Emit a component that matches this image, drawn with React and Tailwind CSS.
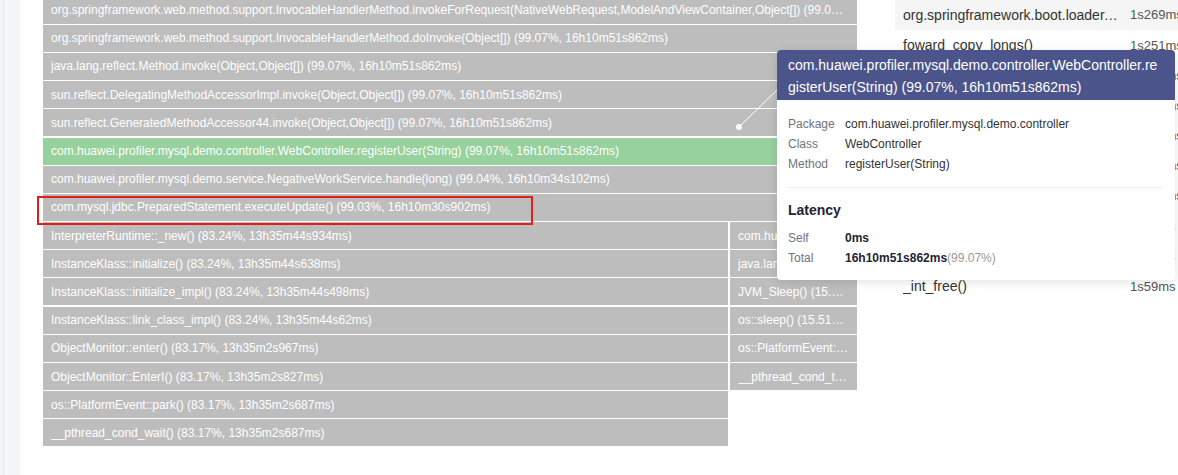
import React from 'react'

const rows = [
  ['org.springframework.web.method.support.InvocableHandlerMethod.invokeForRequest(NativeWebRequest,ModelAndViewContainer,Object[]) (99.07%, 16h10m51s862ms)'],
  ['org.springframework.web.method.support.InvocableHandlerMethod.doInvoke(Object[]) (99.07%, 16h10m51s862ms)'],
  ['java.lang.reflect.Method.invoke(Object,Object[]) (99.07%, 16h10m51s862ms)'],
  ['sun.reflect.DelegatingMethodAccessorImpl.invoke(Object,Object[]) (99.07%, 16h10m51s862ms)'],
  ['sun.reflect.GeneratedMethodAccessor44.invoke(Object,Object[]) (99.07%, 16h10m51s862ms)'],
  ['com.huawei.profiler.mysql.demo.controller.WebController.registerUser(String) (99.07%, 16h10m51s862ms)'],
  ['com.huawei.profiler.mysql.demo.service.NegativeWorkService.handle(long) (99.04%, 16h10m34s102ms)'],
  ['com.mysql.jdbc.PreparedStatement.executeUpdate() (99.03%, 16h10m30s902ms)'],
  ['InterpreterRuntime::_new() (83.24%, 13h35m44s934ms)', 'com.huawei.profiler.mysql.demo.service (15.60%, 2h31m3s)'],
  ['InstanceKlass::initialize() (83.24%, 13h35m44s638ms)', 'java.lang.Thread.sleep(long) (15.52%, 2h30m10s)'],
  ['InstanceKlass::initialize_impl() (83.24%, 13h35m44s498ms)', 'JVM_Sleep() (15.52%, 2h30m10s)'],
  ['InstanceKlass::link_class_impl() (83.24%, 13h35m44s62ms)', 'os::sleep() (15.51%, 2h30m2s)'],
  ['ObjectMonitor::enter() (83.17%, 13h35m2s967ms)', 'os::PlatformEvent::park(long) (15.51%)'],
  ['ObjectMonitor::EnterI() (83.17%, 13h35m2s827ms)', '__pthread_cond_timedwait() (15.51%)'],
  ['os::PlatformEvent::park() (83.17%, 13h35m2s687ms)'],
  ['__pthread_cond_wait() (83.17%, 13h35m2s687ms)'],
]

const topList = [
  ['org.springframework.boot.loader.jar.JarFile', '1s269ms'],
  ['foward_copy_longs()', '1s251ms'],
  ['java.util.zip.Inflater.inflateBytes()', '1s237ms'],
  ['java.lang.ClassLoader.defineClass1()', '1s203ms'],
  ['SymbolTable::lookup()', '1s188ms'],
  ['ClassFileParser::parse_method()', '1s154ms'],
  ['Rewriter::rewrite()', '1s121ms'],
  ['malloc()', '1s98ms'],
  ['memcpy()', '1s76ms'],
  ['_int_free()', '1s59ms'],
]

function Bar({ label, green, className }) {
  return (
    <div
      className={`h-[27px] flex items-center px-2 text-[12px] text-white overflow-hidden ${
        green ? 'bg-[#97d19d]' : 'bg-[#bdbdbd]'
      } ${className}`}
    >
      <span className="truncate">{label}</span>
    </div>
  )
}

export default function App() {
  return (
    <div className="relative flex w-[1178px] h-[475px] overflow-hidden bg-white font-['Liberation_Sans',Arial,sans-serif]">
      <div className="w-[20px] shrink-0 bg-[#f4f5f7] pl-[3px]">
        <div className="h-full border-l border-[#e4e5ea]" />
      </div>

      <div className="flex flex-1 pl-[23px]">
        {/* flame graph */}
        <div className="w-[814px] shrink-0 -mt-[3.4px] flex flex-col">
          {rows.map(([a, b], i) => (
            <div key={i} className="h-[28.2px] flex gap-[2px] shrink-0">
              {rows[i].length === 1 && i < 8 ? (
                <Bar label={a} green={i === 5} className="w-full" />
              ) : (
                <>
                  <Bar label={a} className="w-[685px] shrink-0" />
                  {b && <Bar label={b} className="w-[127px] shrink-0" />}
                </>
              )}
            </div>
          ))}
        </div>

        {/* top list */}
        <div className="ml-[38px] flex-1 flex flex-col">
          {topList.map(([name, time], i) => (
            <div
              key={name}
              className={`h-[30.2px] flex items-center pl-2 shrink-0 ${i === 0 ? 'bg-[#f5f5f5]' : ''}`}
            >
              <span className="w-[216px] truncate text-[14px] text-[#333]">{name}</span>
              <span className="ml-[11px] text-[13px] text-[#555] whitespace-nowrap">{time}</span>
            </div>
          ))}
        </div>
      </div>

      {/* highlight annotation */}
      <div className="absolute left-[37px] top-[196px] w-[496px] h-[29px] border-2 border-[#e51c1c]" />

      {/* tooltip pointer */}
      <svg className="absolute left-0 top-0 pointer-events-none" width="1178" height="475">
        <line x1="739" y1="127" x2="778" y2="89" stroke="#ffffff" strokeWidth="1" />
        <circle cx="739" cy="127" r="3" fill="#ffffff" />
      </svg>

      {/* tooltip */}
      <div className="absolute left-[777px] top-[50px] w-[398px] rounded-[4px] bg-white shadow-[0_2px_10px_rgba(0,0,0,0.12)] overflow-hidden">
        <div className="bg-[#4b548b] px-[11px] pt-[4px] pb-[2px] text-[14px] leading-[22px] text-white break-all">
          com.huawei.profiler.mysql.demo.controller.WebController.registerUser(String) (99.07%, 16h10m51s862ms)
        </div>
        <div className="pl-[11px] pr-[12px] pt-[14px] pb-[12px] text-[12px]">
          <div className="flex leading-[20px]">
            <span className="w-[57px] text-[#6f7480]">Package</span>
            <span className="text-[#333]">com.huawei.profiler.mysql.demo.controller</span>
          </div>
          <div className="flex leading-[20px]">
            <span className="w-[57px] text-[#6f7480]">Class</span>
            <span className="text-[#333]">WebController</span>
          </div>
          <div className="flex leading-[20px]">
            <span className="w-[57px] text-[#6f7480]">Method</span>
            <span className="text-[#333]">registerUser(String)</span>
          </div>
          <div className="mt-[13px] border-t border-[#ececec]" />
          <div className="mt-[12px] text-[14px] leading-[20px] font-bold text-[#1f2433]">Latency</div>
          <div className="mt-[8px] flex leading-[20px]">
            <span className="w-[57px] text-[#6f7480]">Self</span>
            <span className="font-bold text-[#1f2433]">0ms</span>
          </div>
          <div className="flex leading-[20px]">
            <span className="w-[57px] text-[#6f7480]">Total</span>
            <span className="font-bold text-[#1f2433]">16h10m51s862ms</span>
            <span className="text-[#999]">(99.07%)</span>
          </div>
        </div>
      </div>
    </div>
  )
}
